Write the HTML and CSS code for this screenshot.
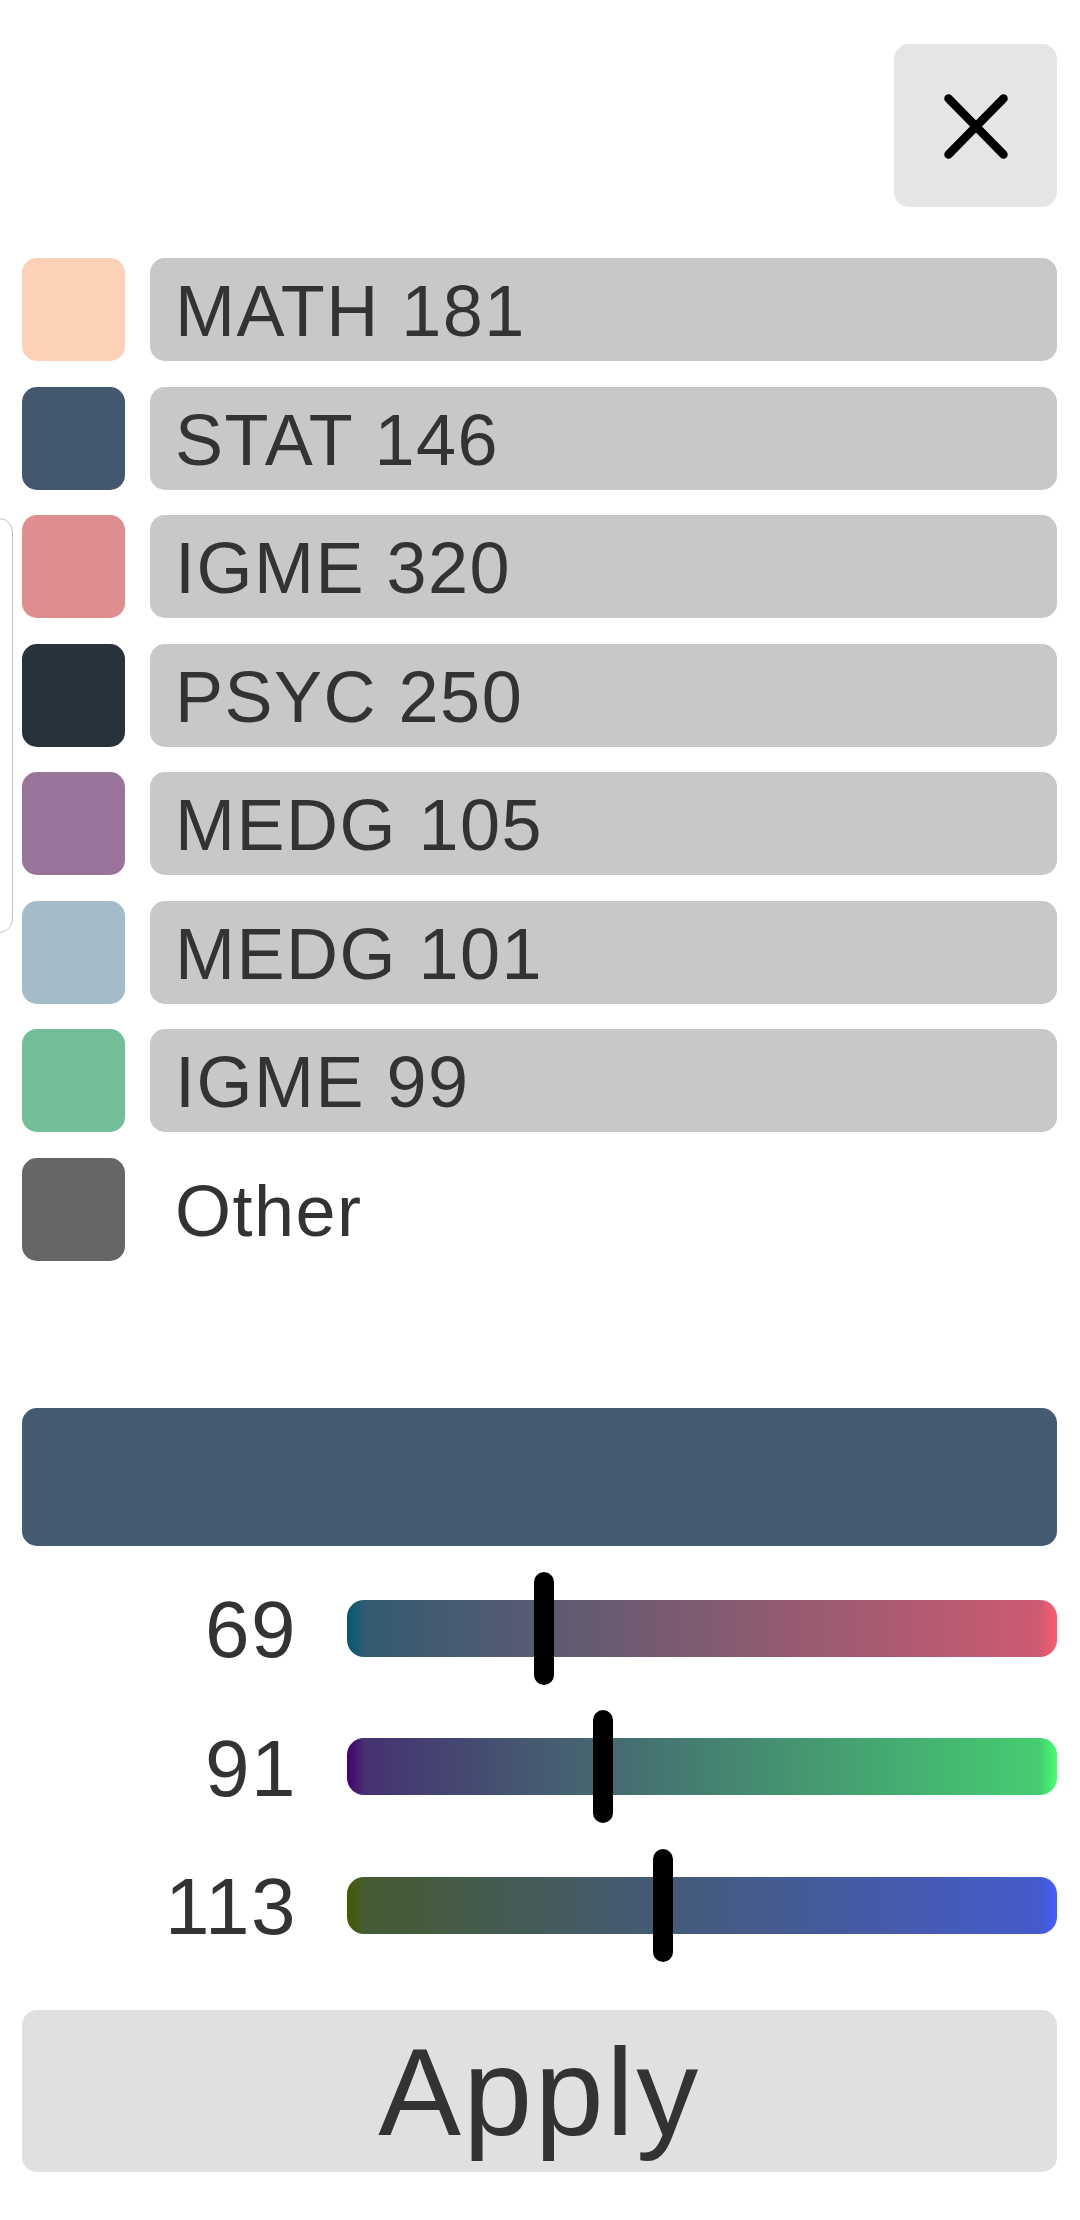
FILE: index.html
```html
<!DOCTYPE html>
<html>
<head>
<meta charset="utf-8">
<link rel="stylesheet" href="styles.css">
</head>
<body>
<div class="edge-panel"></div>
<main class="page">
  <header class="top">
    <button class="close-btn" aria-label="Close">
      <svg width="80" height="80" viewBox="0 0 80 80"><path d="M12.5 12.5 L67.5 68.5 M67.5 12.5 L12.5 68.5" stroke="#000" stroke-width="8.5" stroke-linecap="round" fill="none"/></svg>
    </button>
  </header>

  <ul class="courses">
    <li class="course"><span class="swatch c1"></span><span class="name">MATH 181</span></li>
    <li class="course"><span class="swatch c2"></span><span class="name">STAT 146</span></li>
    <li class="course"><span class="swatch c3"></span><span class="name">IGME 320</span></li>
    <li class="course"><span class="swatch c4"></span><span class="name">PSYC 250</span></li>
    <li class="course"><span class="swatch c5"></span><span class="name">MEDG 105</span></li>
    <li class="course"><span class="swatch c6"></span><span class="name">MEDG 101</span></li>
    <li class="course"><span class="swatch c7"></span><span class="name">IGME 99</span></li>
    <li class="course"><span class="swatch c8"></span><span class="name plain">Other</span></li>
  </ul>

  <div class="preview"></div>

  <div class="sliders">
    <div class="slider-row">
      <span class="val">69</span>
      <div class="track red"><span class="thumb" style="left: calc((100% - 20px) * 69 / 255)"></span></div>
    </div>
    <div class="slider-row">
      <span class="val">91</span>
      <div class="track green"><span class="thumb" style="left: calc((100% - 20px) * 91 / 255)"></span></div>
    </div>
    <div class="slider-row">
      <span class="val">113</span>
      <div class="track blue"><span class="thumb" style="left: calc((100% - 20px) * 113 / 255)"></span></div>
    </div>
  </div>

  <button class="apply">Apply</button>
</main>
</body>
</html>
```

FILE: styles.css
```css
html, body {
  margin: 0;
  padding: 0;
  background: #ffffff;
}
body {
  font-family: "Liberation Sans", Arial, sans-serif;
  color: #333333;
  width: 1080px;
  height: 2220px;
  position: relative;
  overflow: hidden;
}
.edge-panel {
  position: absolute;
  left: -60px;
  top: 518px;
  width: 71px;
  height: 413px;
  border: 1.5px solid #c2c2c2;
  border-radius: 14px;
}
.page {
  padding: 44px 23px 0 22px;
  display: flex;
  flex-direction: column;
}
.top {
  display: flex;
  justify-content: flex-end;
}
.close-btn {
  width: 163px;
  height: 163px;
  border: none;
  border-radius: 15px;
  background: #e5e5e5;
  display: flex;
  align-items: center;
  justify-content: center;
  padding: 0;
  padding-top: 1px;
}
.close-btn svg { display: block; }
.courses {
  list-style: none;
  margin: 51px 0 0 0;
  padding: 0;
  display: flex;
  flex-direction: column;
  gap: 25.5px;
}
.course {
  display: flex;
  height: 103px;
  gap: 25px;
}
.swatch {
  width: 103px;
  height: 103px;
  border-radius: 15px;
  flex: none;
}
.c1 { background: #fcd1b5; }
.c2 { background: #43576e; }
.c3 { background: #de8e8e; }
.c4 { background: #27323c; }
.c5 { background: #997499; }
.c6 { background: #a4bcc8; }
.c7 { background: #72be97; }
.c8 { background: #666666; }
.name {
  flex: 1;
  background: #c8c8c8;
  border-radius: 15px;
  font-size: 72px;
  letter-spacing: 1.5px;
  line-height: 1;
  display: flex;
  align-items: center;
  padding-left: 25px;
  padding-top: 3px;
  box-sizing: border-box;
}
.name.plain {
  background: transparent;
}
.preview {
  margin-top: 147px;
  height: 138px;
  border-radius: 15px;
  background: rgb(69, 91, 113);
}
.sliders {
  margin-top: 26px;
  display: flex;
  flex-direction: column;
  gap: 25.5px;
}
.slider-row {
  display: grid;
  grid-template-columns: 275px 1fr;
  column-gap: 50px;
  height: 113px;
  align-items: center;
}
.val {
  font-size: 80px;
  letter-spacing: 1.5px;
  text-align: right;
  line-height: 1;
  padding-top: 4px;
}
.track {
  position: relative;
  height: 57px;
  border-radius: 17px;
}
.track.red {
  background: linear-gradient(to right, rgb(0,91,113) 0%, rgb(50,91,113) 2.5%, rgb(205,91,113) 97.5%, rgb(255,91,113) 100%);
}
.track.green {
  background: linear-gradient(to right, rgb(69,0,113) 0%, rgb(69,50,113) 2.5%, rgb(69,205,113) 97.5%, rgb(69,255,113) 100%);
}
.track.blue {
  background: linear-gradient(to right, rgb(69,91,0) 0%, rgb(69,91,50) 2.5%, rgb(69,91,205) 97.5%, rgb(69,91,255) 100%);
}
.thumb {
  position: absolute;
  top: -28px;
  width: 20px;
  height: 113px;
  border-radius: 10px;
  background: #000000;
}
.apply {
  margin-top: 48px;
  height: 162px;
  border: none;
  border-radius: 15px;
  background: #e0e0e0;
  font-family: "Liberation Sans", Arial, sans-serif;
  font-size: 124px;
  letter-spacing: 2.5px;
  line-height: 1;
  color: #333333;
  padding: 0;
  padding-top: 2px;
}
```
